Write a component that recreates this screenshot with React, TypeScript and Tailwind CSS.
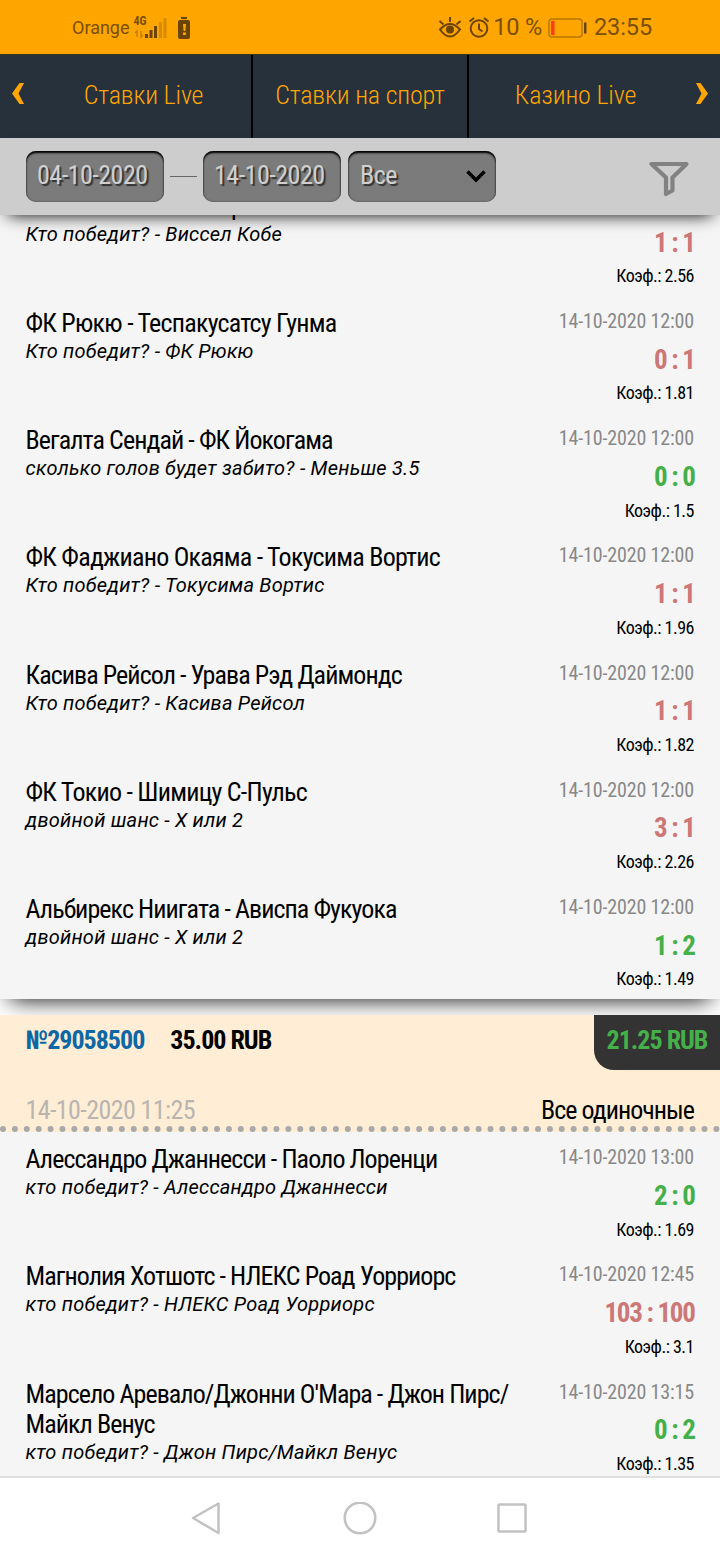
import clsx from 'clsx'

interface Bet {
    title: string
    pick: string
    date: string
    score: string
    won: boolean
    odds: string
    wide?: boolean
}

const expressBets: Bet[] = [
    { title: 'Виссел Кобе - Саппоро', pick: 'Кто победит? - Виссел Кобе', date: '14-10-2020 12:00', score: '1 : 1', won: false, odds: '2.56', wide: true },
    { title: 'ФК Рюкю - Теспакусатсу Гунма', pick: 'Кто победит? - ФК Рюкю', date: '14-10-2020 12:00', score: '0 : 1', won: false, odds: '1.81', wide: true },
    { title: 'Вегалта Сендай - ФК Йокогама', pick: 'сколько голов будет забито? - Меньше 3.5', date: '14-10-2020 12:00', score: '0 : 0', won: true, odds: '1.5' },
    { title: 'ФК Фаджиано Окаяма - Токусима Вортис', pick: 'Кто победит? - Токусима Вортис', date: '14-10-2020 12:00', score: '1 : 1', won: false, odds: '1.96', wide: true },
    { title: 'Касива Рейсол - Урава Рэд Даймондс', pick: 'Кто победит? - Касива Рейсол', date: '14-10-2020 12:00', score: '1 : 1', won: false, odds: '1.82' },
    { title: 'ФК Токио - Шимицу С-Пульс', pick: 'двойной шанс - X или 2', date: '14-10-2020 12:00', score: '3 : 1', won: false, odds: '2.26', wide: true },
    { title: 'Альбирекс Ниигата - Ависпа Фукуока', pick: 'двойной шанс - X или 2', date: '14-10-2020 12:00', score: '1 : 2', won: true, odds: '1.49' },
]

const singleBets: Bet[] = [
    { title: 'Алессандро Джаннесси - Паоло Лоренци', pick: 'кто победит? - Алессандро Джаннесси', date: '14-10-2020 13:00', score: '2 : 0', won: true, odds: '1.69' },
    { title: 'Магнолия Хотшотс - НЛЕКС Роад Уорриорс', pick: 'кто победит? - НЛЕКС Роад Уорриорс', date: '14-10-2020 12:45', score: '103 : 100', won: false, odds: '3.1' },
    { title: "Марсело Аревало/Джонни О'Мара - Джон Пирс/\nМайкл Венус", pick: 'кто победит? - Джон Пирс/Майкл Венус', date: '14-10-2020 13:15', score: '0 : 2', won: true, odds: '1.35' },
]

function StatusBar() {
    return (
        <div className="flex h-[54px] shrink-0 items-center bg-[#ffa500] pl-[72px] pr-[68px] pt-[2px] font-['Roboto',sans-serif] text-[#7a4f00]">
            <span className="text-[18px] leading-none">Orange</span>
            <div className="relative ml-1 h-[22px] w-[34px]">
                <span className="absolute left-0 -top-[2px] font-['Roboto_Condensed','Roboto',sans-serif] text-[12px] font-bold leading-none">4G</span>
                <svg className="absolute inset-0" width="34" height="22" viewBox="0 0 34 22">
                    <path d="M3 20v-6l-2 2M7 14v6l2-2" fill="none" stroke="#c98200" strokeWidth="1.5" />
                    <path d="M11 17h3v4h-3zM15.500 13h3v8h-3zM20 9h3v12h-3z" fill="#6b4500" />
                    <path d="M25 5h3v16h-3zM29.500 1h3v20h-3z" fill="#d68b00" />
                </svg>
            </div>
            <svg className="ml-[9px]" width="14" height="22" viewBox="0 0 14 22">
                <rect x="4" y="0" width="6" height="2" fill="#6b4500" />
                <rect x="1" y="3" width="12" height="19" rx="2" fill="#6b4500" />
                <path d="M6 7h3l-.6 7H6.600z" fill="#ffa500" />
                <rect x="6" y="15.500" width="3" height="2.500" fill="#ffa500" />
            </svg>

            <svg className="ml-auto" width="24" height="22" viewBox="0 0 24 22" fill="none" stroke="#6b4500" strokeWidth="2">
                <path d="M2 12.500q10-11 20 0q-10 14-20 0z" />
                <circle cx="12" cy="12.500" r="4" fill="#6b4500" stroke="none" />
                <path d="M12 5V0M5.500 7.500L1.500 4M18.500 7.500l4-3.500" />
            </svg>
            <svg className="ml-[6px]" width="22" height="22" viewBox="0 0 22 22" fill="none" stroke="#6b4500" strokeWidth="2">
                <circle cx="11" cy="11.500" r="8.300" />
                <path d="M11 6.500v5.500l3.500 2.500M1.500 4.500l4.500-3.500M20.500 4.500L16 1" />
            </svg>
            <span className="ml-[3px] text-[23.500px] leading-none tracking-[-0.2px]">10 %</span>
            <svg className="ml-[6px]" width="40" height="20" viewBox="0 0 40 20">
                <rect x="1" y="1" width="33" height="18" rx="3" fill="none" stroke="#b87700" strokeWidth="1.500" />
                <rect x="3" y="3" width="3.500" height="14" fill="#ff3b1d" />
                <rect x="36" y="4.500" width="2.500" height="11" fill="#6b4500" />
            </svg>
            <span className="ml-[6px] text-[23.500px] leading-none tracking-[-0.1px]">23:55</span>
        </div>
    )
}

function TopTabs() {
    return (
        <nav className="flex h-[84px] shrink-0 items-center border-t border-[#3a3320] bg-[#27313b] text-[26px] font-light tracking-[-0.15px] text-[#ffa500]">
            <button className="flex w-9 justify-center pb-[7px]">
                <svg width="12" height="21" viewBox="0 0 12 21" fill="#ffa500">
                    <path d="M7.500 0H12L6.500 10.500L12 21H7.500L0 10.500z" />
                </svg>
            </button>
            <a className="flex h-full w-[217px] items-center justify-center border-r-2 border-black pb-[3px]">Ставки Live</a>
            <a className="flex h-full w-[216px] items-center justify-center border-r-2 border-black pb-[3px]">Ставки на спорт</a>
            <a className="flex h-full w-[215px] items-center justify-center pb-[3px] pr-[2px]">Казино Live</a>
            <button className="flex w-9 justify-center pb-[7px]">
                <svg width="12" height="21" viewBox="0 0 12 21" fill="#ffa500">
                    <path d="M4.500 0H0L5.500 10.500L0 21H4.500L12 10.500z" />
                </svg>
            </button>
        </nav>
    )
}

const field = 'flex h-[51px] items-center rounded-[10px] bg-[#7b7b7b] px-[11px] pb-[2px] text-[26px] tracking-[-0.5px] text-[#d0d0d0] shadow-[inset_0_2px_2px_#000,inset_0_0_2px_#444] [text-shadow:2px_2px_1px_#333]'

function FilterBar() {
    return (
        <div className="relative z-10 flex h-[77px] shrink-0 items-center bg-[#cdcdcd] pl-[26px] pr-[31px] shadow-[0_8px_16px_-8px_#000]">
            <div className={clsx(field, 'w-[138px]')}>04-10-2020</div>
            <div className="mx-[6px] h-px w-[27px] bg-[#666]" />
            <div className={clsx(field, 'w-[138px]')}>14-10-2020</div>
            <div className={clsx(field, 'ml-[7px] w-[148px] justify-between pl-[12px]')}>
                Все
                <svg className="mr-[-2px]" width="22" height="14" viewBox="0 0 22 14">
                    <path d="M2.500 2.500L11 11l8.500-8.500" fill="none" stroke="#000" strokeWidth="3.500" />
                </svg>
            </div>
            <svg className="ml-auto mt-1" width="40" height="36" viewBox="0 0 40 36">
                <path d="M2.500 3H37.500L23.500 16.500V29.500L17 33V16.500z" fill="none" stroke="#828282" strokeWidth="4.200" strokeLinejoin="round" />
            </svg>
        </div>
    )
}

function BetRow({ bet }: { bet: Bet }) {
    return (
        <div className="flex h-[117.2px] shrink-0 justify-between pl-[25.5px] pr-[26px] pt-3">
            <div>
                <p className={clsx('whitespace-pre text-[26px] leading-[30px]', bet.wide ? 'tracking-[-0.76px]' : 'tracking-[-0.93px]')}>
                    {bet.title}
                </p>
                <p className="font-['Roboto',sans-serif] text-[20px] italic leading-[26px] tracking-[0.22px]">{bet.pick}</p>
            </div>
            <div className="flex flex-col items-end whitespace-nowrap">
                <span className="text-[20px] leading-[26px] tracking-[-0.15px] text-[#888]">{bet.date}</span>
                <span className={clsx('-mr-[0.5px] mt-[9.7px] text-[27px] font-bold leading-[32px] tracking-[-1.3px]', bet.won ? 'text-[#45b049]' : 'text-[#cd7777]')}>
                    {bet.score}
                </span>
                <span className="mt-[6.7px] text-[18px] leading-[22px] tracking-[-0.5px]">Коэф.: {bet.odds}</span>
            </div>
        </div>
    )
}

export default function App() {
    return (
        <div className="flex h-[1560px] w-[720px] flex-col overflow-hidden bg-white font-['Roboto_Condensed','Roboto',sans-serif] text-black">
            <StatusBar />
            <TopTabs />
            <FilterBar />

            <main className="flex h-[1261px] shrink-0 flex-col overflow-hidden">
                <section className="-mt-[36.2px] mb-[16px] shrink-0 bg-[#f5f5f5] shadow-[0_10px_22px_-10px_#000]">
                    {expressBets.map((bet) => <BetRow key={bet.title} bet={bet} />)}
                </section>

                <section className="relative shrink-0 bg-[#f5f5f5]">
                    <header className="flex h-[117px] flex-col justify-between border-b-[6px] border-dotted border-[#a9a9a9] bg-[#ffedd5]">
                        <div className="flex pl-[25.5px] text-[26px] font-bold tracking-[-1px]">
                            <span className="mt-[10px] leading-[30px] text-[#0d67a5]">№29058500</span>
                            <span className="ml-[26px] mt-[10px] leading-[30px]">35.00 RUB</span>
                            <span className="ml-auto flex h-[55px] w-[126px] items-center justify-center rounded-bl-[20px] bg-[#333] pb-1 text-[#45b049]">21.25 RUB</span>
                        </div>
                        <div className="flex justify-between pl-[25.5px] pr-[26px] pb-px text-[26px] leading-[30px]">
                            <span className="tracking-[-0.59px] text-[#b8b5b0]">14-10-2020 11:25</span>
                            <span className="tracking-[-0.97px]">Все одиночные</span>
                        </div>
                    </header>
                    {singleBets.map((bet) => <BetRow key={bet.title} bet={bet} />)}
                </section>
            </main>

            <footer className="flex h-[84px] shrink-0 items-center border-t-2 border-[#dfdfdf] pl-[191px]">
                <svg width="337" height="34" viewBox="0 0 337 34" fill="none" stroke="#c2c2c2" strokeWidth="2.500" strokeLinejoin="round">
                    <path d="M2 16L27.500 1.500V31z" />
                    <circle cx="169" cy="16" r="15.300" />
                    <rect x="307.500" y="2.500" width="27" height="27" rx="1" />
                </svg>
            </footer>
        </div>
    )
}
